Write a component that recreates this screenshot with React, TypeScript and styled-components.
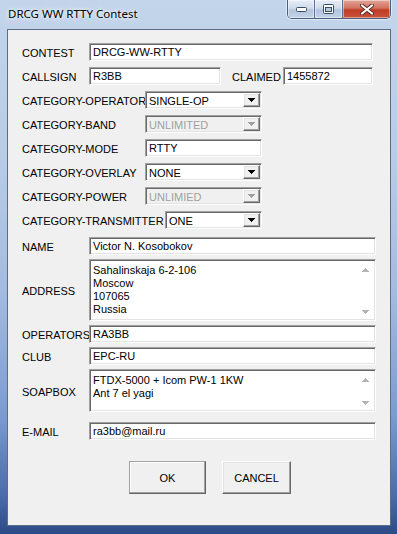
import React from "react";
import styled, { createGlobalStyle, css } from "styled-components";

const Global = createGlobalStyle`
  html, body { margin: 0; padding: 0; }
  body { width: 397px; height: 534px; overflow: hidden; background: #2c4a86; }
  #root { width: 397px; height: 534px; }
`;

const sunken = css`
  border: 1px solid;
  border-color: #a0a0a0 #ffffff #ffffff #a0a0a0;
  box-shadow: inset 1px 1px 0 #696969, inset -1px -1px 0 #e3e3e3;
`;

const raised = css`
  border: 1px solid;
  border-color: #ffffff #696969 #696969 #ffffff;
  box-shadow: inset -1px -1px 0 #a0a0a0, inset 1px 1px 0 #e3e3e3;
`;

const Window = styled.div`
  width: 397px;
  height: 534px;
  box-sizing: border-box;
  display: flex;
  flex-direction: column;
  padding: 0 6px 8px 7px;
  background: linear-gradient(
    180deg,
    #c3d5eb 0%,
    #b8cce6 30%,
    #a3bbe0 55%,
    #7b9bd0 78%,
    #4a6aaa 93%,
    #2c4a86 100%
  );
`;

const TitleBar = styled.div`
  height: 29px;
  flex: none;
  display: flex;
  align-items: flex-start;
`;

const Title = styled.div`
  flex: 1;
  padding: 6px 0 0 1px;
  font-family: "Noto Sans", "Open Sans", sans-serif;
  font-size: 11.5px;
  line-height: 16px;
  color: #000;
  text-shadow: 0 0 6px rgba(255, 255, 255, 0.95), 0 0 3px rgba(255, 255, 255, 0.9);
`;

const Caption = styled.div`
  display: flex;
  height: 19px;
  box-sizing: border-box;
  border: 1px solid #4b5d7c;
  border-top: none;
  border-radius: 0 0 5px 5px;
  overflow: hidden;
  box-shadow: 0 0 0 1px rgba(255, 255, 255, 0.5);
`;

const CapButton = styled.div<{ $w: number; $close?: boolean; $first?: boolean }>`
  width: ${(p) => p.$w}px;
  height: 100%;
  display: flex;
  align-items: center;
  justify-content: center;
  box-sizing: border-box;
  border-left: ${(p) => (p.$first ? "none" : "1px solid #5d6f8c")};
  box-shadow: inset 0 0 0 1px rgba(255, 255, 255, 0.45);
  background: ${(p) =>
    p.$close
      ? "linear-gradient(180deg, #e2a598 0%, #d2715f 45%, #bf3c27 55%, #c8523a 100%)"
      : "linear-gradient(180deg, #e6edf6 0%, #d0dcea 45%, #b4c5dc 55%, #c2d2e6 100%)"};
`;

const Client = styled.div`
  flex: 1;
  box-sizing: border-box;
  border: 1px solid #5d6d88;
  background: #f0f0f0;
  display: flex;
  flex-direction: column;
  padding: 13px 0 0 14px;
  font-family: "Liberation Sans", Arial, sans-serif;
  font-size: 11px;
  color: #000;
`;

const Group = styled.div<{ $gap: number; $mt?: number }>`
  display: flex;
  flex-direction: column;
  gap: ${(p) => p.$gap}px;
  margin-top: ${(p) => p.$mt ?? 0}px;
`;

const Row = styled.div<{ $h?: number; $mt?: number }>`
  display: flex;
  align-items: center;
  height: ${(p) => p.$h ?? 18}px;
  margin-top: ${(p) => p.$mt ?? 0}px;
`;

const Label = styled.div<{ $w: number; $ml?: number }>`
  width: ${(p) => p.$w}px;
  margin-left: ${(p) => p.$ml ?? 0}px;
  flex: none;
  white-space: nowrap;
  padding-top: 2px;
`;

const Field = styled.div<{ $w: number }>`
  ${sunken};
  width: ${(p) => p.$w}px;
  height: 100%;
  box-sizing: border-box;
  background: #fff;
  padding: 1px 3px 0;
  line-height: 15px;
  white-space: nowrap;
  overflow: hidden;
`;

const Select = styled.div<{ $w: number; $disabled?: boolean }>`
  ${sunken};
  width: ${(p) => p.$w}px;
  height: 100%;
  box-sizing: border-box;
  background: ${(p) => (p.$disabled ? "#f0f0f0" : "#fff")};
  color: ${(p) => (p.$disabled ? "#a0a0a0" : "#000")};
  display: flex;
  padding: 2px;
`;

const SelectText = styled.div`
  flex: 1;
  padding: 1px 0 0 1px;
  line-height: 13px;
  white-space: nowrap;
`;

const ArrowBtn = styled.div`
  ${raised};
  width: 17px;
  box-sizing: border-box;
  background: #f0f0f0;
  display: flex;
  align-items: center;
  justify-content: center;
  margin: -1px -1px -1px 0;
`;

const Area = styled.div<{ $w: number }>`
  ${sunken};
  width: ${(p) => p.$w}px;
  height: 100%;
  box-sizing: border-box;
  background: #fff;
  display: flex;
`;

const AreaText = styled.div`
  flex: 1;
  padding: 4px 3px 0 3px;
  line-height: 13px;
  white-space: pre;
`;

const ScrollCol = styled.div`
  width: 17px;
  display: flex;
  flex-direction: column;
  justify-content: space-between;
  align-items: center;
  padding: 8px 0 6px 0;
  margin-right: 1px;
`;

const Buttons = styled.div`
  display: flex;
  gap: 16px;
  margin-top: 21px;
  padding-left: 107px;
`;

const Btn = styled.div<{ $w: number; $default?: boolean }>`
  ${raised};
  width: ${(p) => p.$w}px;
  height: 33px;
  box-sizing: border-box;
  background: #f0f0f0;
  display: flex;
  align-items: center;
  justify-content: center;
  ${(p) =>
    p.$default &&
    css`
      border-color: #a0a0a0 #646464 #646464 #a0a0a0;
      box-shadow: inset -1px -1px 0 #a0a0a0, inset 1px 1px 0 #ffffff;
    `}
`;

const Arrow = ({ up, color }: { up?: boolean; color: string }) => (
  <svg width="7" height="4" viewBox="0 0 7 4" shapeRendering="crispEdges">
    {up ? (
      <polygon points="3.5,0 7,4 0,4" fill={color} />
    ) : (
      <polygon points="0,0 7,0 3.5,4" fill={color} />
    )}
  </svg>
);

const Drop = ({ w, value, disabled }: { w: number; value: string; disabled?: boolean }) => (
  <Select $w={w} $disabled={disabled}>
    <SelectText>{value}</SelectText>
    <ArrowBtn>
      <Arrow color={disabled ? "#a0a0a0" : "#000"} />
    </ArrowBtn>
  </Select>
);

const TextArea = ({ w, text }: { w: number; text: string }) => (
  <Area $w={w}>
    <AreaText>{text}</AreaText>
    <ScrollCol>
      <Arrow up color="#b4b4b4" />
      <Arrow color="#b4b4b4" />
    </ScrollCol>
  </Area>
);

const MinIcon = () => (
  <svg width="11" height="6" viewBox="0 0 11 6">
    <rect x="0.5" y="1.5" width="10" height="4" rx="1" fill="#fff" stroke="#3b4c68" />
  </svg>
);

const MaxIcon = () => (
  <svg width="11" height="10" viewBox="0 0 11 10">
    <rect x="0.5" y="0.5" width="10" height="9" rx="1" fill="#fff" stroke="#3b4c68" />
    <rect x="2.5" y="3.5" width="6" height="4" fill="#b8c8dc" stroke="#3b4c68" />
  </svg>
);

const CloseIcon = () => (
  <svg width="14" height="11" viewBox="0 0 14 11">
    <path d="M2 1.5 L12 9.5 M12 1.5 L2 9.5" stroke="#5b2a22" strokeWidth="4" strokeLinecap="round" />
    <path d="M2 1.5 L12 9.5 M12 1.5 L2 9.5" stroke="#fff" strokeWidth="2.2" strokeLinecap="round" />
  </svg>
);

export default function App() {
  return (
    <>
      <Global />
      <Window>
        <TitleBar>
          <Title>DRCG WW RTTY Contest</Title>
          <Caption>
            <CapButton $w={26} $first>
              <MinIcon />
            </CapButton>
            <CapButton $w={28}>
              <MaxIcon />
            </CapButton>
            <CapButton $w={48} $close>
              <CloseIcon />
            </CapButton>
          </Caption>
        </TitleBar>
        <Client>
          <Group $gap={6}>
            <Row>
              <Label $w={67}>CONTEST</Label>
              <Field $w={284}>DRCG-WW-RTTY</Field>
            </Row>
            <Row>
              <Label $w={67}>CALLSIGN</Label>
              <Field $w={132}>R3BB</Field>
              <Label $w={51} $ml={11}>
                CLAIMED
              </Label>
              <Field $w={90}>1455872</Field>
            </Row>
            <Row>
              <Label $w={123}>CATEGORY-OPERATOR</Label>
              <Drop w={117} value="SINGLE-OP" />
            </Row>
            <Row>
              <Label $w={123}>CATEGORY-BAND</Label>
              <Drop w={117} value="UNLIMITED" disabled />
            </Row>
            <Row>
              <Label $w={123}>CATEGORY-MODE</Label>
              <Field $w={117}>RTTY</Field>
            </Row>
            <Row>
              <Label $w={123}>CATEGORY-OVERLAY</Label>
              <Drop w={117} value="NONE" />
            </Row>
            <Row>
              <Label $w={123}>CATEGORY-POWER</Label>
              <Drop w={117} value="UNLIMIED" disabled />
            </Row>
            <Row>
              <Label $w={143}>CATEGORY-TRANSMITTER</Label>
              <Drop w={97} value="ONE" />
            </Row>
          </Group>
          <Group $gap={4} $mt={8}>
            <Row>
              <Label $w={67}>NAME</Label>
              <Field $w={287}>Victor N. Kosobokov</Field>
            </Row>
            <Row $h={62}>
              <Label $w={67}>ADDRESS</Label>
              <TextArea w={287} text={"Sahalinskaja 6-2-106\nMoscow\n107065\nRussia"} />
            </Row>
            <Row>
              <Label $w={67}>OPERATORS</Label>
              <Field $w={287}>RA3BB</Field>
            </Row>
            <Row>
              <Label $w={67}>CLUB</Label>
              <Field $w={287}>EPC-RU</Field>
            </Row>
            <Row $h={43}>
              <Label $w={67}>SOAPBOX</Label>
              <TextArea w={287} text={"FTDX-5000 + Icom PW-1 1KW\nAnt 7 el yagi"} />
            </Row>
            <Row $mt={6}>
              <Label $w={67}>E-MAIL</Label>
              <Field $w={287}>ra3bb@mail.ru</Field>
            </Row>
          </Group>
          <Buttons>
            <Btn $w={77} $default>
              OK
            </Btn>
            <Btn $w={69}>CANCEL</Btn>
          </Buttons>
        </Client>
      </Window>
    </>
  );
}
